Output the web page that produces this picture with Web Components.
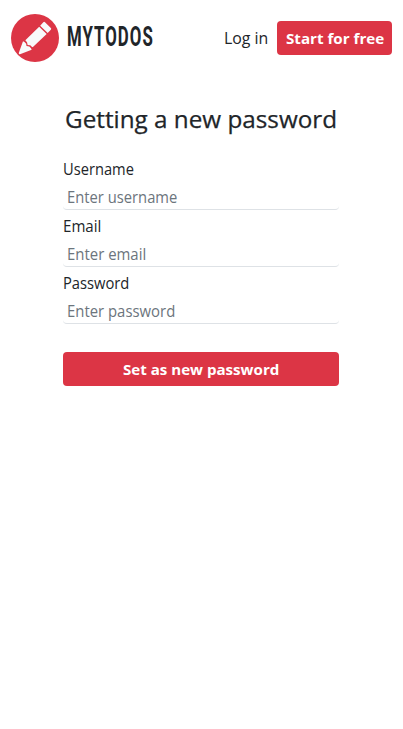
<!DOCTYPE html>
<html lang="en">
<head>
<meta charset="utf-8">
<title>MyTodos</title>
<style>
body { margin: 0; background: #fff; color: #212529; font: 15.5px/24px "Open Sans", "Noto Sans", sans-serif; }
</style>
</head>
<body>
<todo-page></todo-page>
<script>
// Text set to an exact advance width.
customElements.define('fit-text', class extends HTMLElement {
  connectedCallback() {
    this.attachShadow({ mode: 'open' }).innerHTML = `
      <style>
        :host { display: block; white-space: nowrap; flex: none; }
        span { display: inline-block; transform-origin: 0 50%; }
      </style><span></span>`;
    const span = this.shadowRoot.querySelector('span');
    span.textContent = this.getAttribute('text');
    const width = Number(this.getAttribute('width'));
    this.style.width = width + 'px';
    span.style.transform = `scaleX(${width / span.offsetWidth})`;
  }
});

customElements.define('todo-logo', class extends HTMLElement {
  connectedCallback() {
    this.attachShadow({ mode: 'open' }).innerHTML = `
      <style>
        :host { display: flex; align-items: center; gap: 8px; height: 48px; }
        svg { display: block; }
        fit-text { font: 700 28px/30px Roboto, sans-serif; letter-spacing: 1.7px; padding-bottom: 2px; }
      </style>
      <svg width="48" height="48" viewBox="33 42 144 144">
        <circle cx="105" cy="114" r="72" fill="#dc3545"/>
        <g fill="#f8f9fa">
          <path d="M130 66.500Q132.500 64 135 66.500L152.500 84Q155 86.500 152.500 89L143 99L120.500 77Z"/>
          <path d="M117.500 80L140 102L98 142L93.500 139L91 136L83 135L81 127L76 121Z"/>
          <path d="M69 124L73.500 126L78.500 131L79.500 138L88 139.500L93 144.500L95 149L60 162.500Q55.500 163 56.500 158Z"/>
        </g>
      </svg>
      <fit-text text="MYTODOS" width="87"></fit-text>`;
  }
});

customElements.define('todo-button', class extends HTMLElement {
  connectedCallback() {
    this.attachShadow({ mode: 'open' }).innerHTML = `
      <style>
        :host { display: block; }
        button { display: flex; justify-content: center; align-items: center; width: 100%; height: 34px;
          border: 0; border-radius: 4px; padding: 0; background: #dc3545; color: #fff;
          font: inherit; font-size: 15px; font-weight: 700; }
      </style>
      <button type="button"><slot></slot></button>`;
  }
});

customElements.define('todo-nav', class extends HTMLElement {
  connectedCallback() {
    this.attachShadow({ mode: 'open' }).innerHTML = `
      <style>
        :host { display: flex; align-items: center; height: 76px; padding: 0 11px; box-sizing: border-box; }
        .login { margin: 0 9px 0 auto; }
        todo-button { width: 115px; }
      </style>
      <todo-logo></todo-logo>
      <fit-text class="login" text="Log in" width="44"></fit-text>
      <todo-button><fit-text text="Start for free" width="98"></fit-text></todo-button>`;
  }
});

customElements.define('todo-field', class extends HTMLElement {
  connectedCallback() {
    const a = n => this.getAttribute(n);
    this.attachShadow({ mode: 'open' }).innerHTML = `
      <style>
        :host { display: block; height: 57px; }
        .box { height: 29px; box-sizing: border-box; padding: 4px 4px 0; border-bottom: 1px solid #dee2e6;
          border-radius: 4px; color: #6c757d; line-height: 24px; }
        .label { height: 24px; }
      </style>
      <fit-text class="label" text="${a('label')}" width="${a('label-width')}"></fit-text>
      <div class="box"><fit-text text="${a('hint')}" width="${a('hint-width')}"></fit-text></div>`;
  }
});

customElements.define('todo-page', class extends HTMLElement {
  connectedCallback() {
    this.attachShadow({ mode: 'open' }).innerHTML = `
      <style>
        :host { display: block; min-height: 729px; }
        main { display: flex; flex-direction: column; width: 276px; margin: 0 64px 0 63px; padding-top: 27px; }
        h1 { margin: 0 0 23px 1.5px; font-size: 24px; line-height: 31px; font-weight: 500; -webkit-text-stroke: 0.25px; }
        todo-button { margin-top: 24px; }
      </style>
      <todo-nav></todo-nav>
      <main>
        <h1><fit-text text="Getting a new password" width="272"></fit-text></h1>
        <todo-field label="Username" label-width="71" hint="Enter username" hint-width="110.500"></todo-field>
        <todo-field label="Email" label-width="38" hint="Enter email" hint-width="79"></todo-field>
        <todo-field label="Password" label-width="66.500" hint="Enter password" hint-width="108.500"></todo-field>
        <todo-button><fit-text text="Set as new password" width="156"></fit-text></todo-button>
      </main>`;
  }
});
</script>
</body>
</html>
